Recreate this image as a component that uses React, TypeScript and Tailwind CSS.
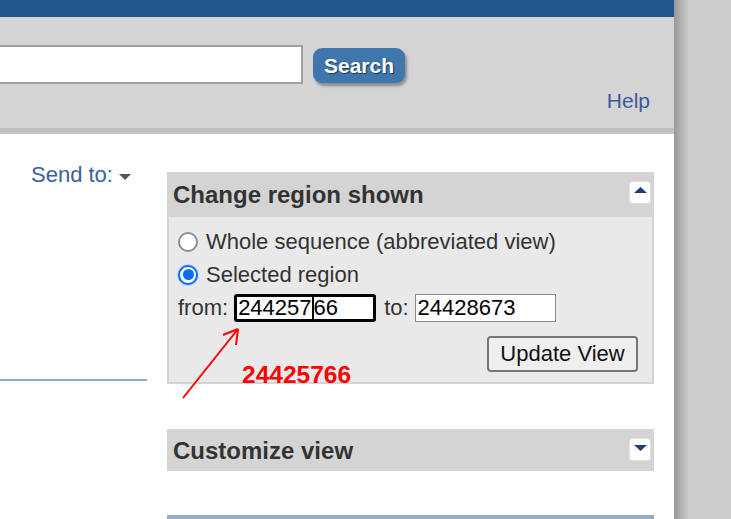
import React from "react";

const FONT = "font-['Liberation_Sans',Arial,sans-serif]";

function ToggleButton({ up }: { up?: boolean }) {
  return (
    <div className="w-[22px] h-[23px] bg-white rounded-[4px] border border-[#e2e2e2] flex items-center justify-center">
      <svg width="13" height="7" viewBox="0 0 13 7" className={up ? "-mt-[4px]" : "-mt-[2px]"}>
        {up ? <polygon points="6.5,0 13,6 0,6" fill="#1f3d73" /> : <polygon points="0,0 13,0 6.5,6" fill="#1f3d73" />}
      </svg>
    </div>
  );
}

function Radio({ checked }: { checked?: boolean }) {
  if (checked) {
    return (
      <span className="w-5 h-5 rounded-full border-2 border-[#0a6cff] bg-white flex items-center justify-center shadow-[0_0_0_1px_#b9d6ff]">
        <span className="w-[11px] h-[11px] rounded-full bg-[#0a6cff]" />
      </span>
    );
  }
  return <span className="w-5 h-5 rounded-full border-2 border-[#8f8f8f] bg-white" />;
}

export default function App() {
  return (
    <div className={`relative w-[731px] h-[519px] overflow-hidden flex ${FONT}`}>
      <div className="w-[674px] shrink-0 flex flex-col bg-white">
        {/* top bar */}
        <div className="h-[17px] shrink-0 bg-[#21568a]" />
        {/* search header */}
        <div className="h-[111px] shrink-0 bg-[#d4d4d4] flex flex-col">
          <div className="pt-[28px] flex items-start">
            <div className="w-[303px] h-[39px] bg-white border-2 border-l-0 border-[#a0a0a0]" />
            <button className="ml-[10px] mt-[3px] w-[92px] h-[35px] rounded-[9px] bg-[#3f77ad] shadow-[2px_3px_3px_rgba(0,0,0,0.35)] text-white font-bold text-[21px] leading-none [text-shadow:1px_1px_1px_#1b3554]">
              Search
            </button>
          </div>
          <div className="mt-[5px] pr-[24px] flex justify-end">
            <span className="text-[21px] leading-[24px] text-[#3a5a9c]">Help</span>
          </div>
        </div>
        <div className="h-[6px] shrink-0 bg-gradient-to-b from-[#bdbdbd] to-[#c6c6c6]" />

        {/* content */}
        <div className="flex shrink-0">
          <div className="w-[147px] shrink-0 flex flex-col">
            <div className="pt-[29px] pl-[31px] flex items-center">
              <span className="text-[22px] leading-[24px] text-[#3b5fa2]">Send to:</span>
              <svg width="12" height="6" viewBox="0 0 12 6" className="ml-[6px] mt-[3px]">
                <polygon points="0,0 12,0 6,6" fill="#555" />
              </svg>
            </div>
            <div className="mt-[192px] h-[2px] bg-[#94aac5]" />
          </div>

          <div className="ml-[20px] w-[487px] shrink-0 pt-[38px] flex flex-col">
            {/* Change region shown */}
            <div className="h-[45px] bg-[#d4d4d4] flex items-center justify-between pl-[6px] pr-[3px]">
              <span className="text-[24px] leading-[28px] font-bold text-[#333]">Change region shown</span>
              <div className="self-start mt-[9px]">
                <ToggleButton up />
              </div>
            </div>
            <div className="bg-[#e9e9e9] border-x-2 border-b-2 border-[#d4d4d4] pt-[8px] pl-[9px] pb-[10px] pr-[14px] text-[22px] text-[#333]">
              <div className="h-[33px] flex items-center gap-[8px]">
                <Radio />
                <span className="leading-[26px]">Whole sequence (abbreviated view)</span>
              </div>
              <div className="h-[33px] flex items-center gap-[8px]">
                <Radio checked />
                <span className="leading-[26px]">Selected region</span>
              </div>
              <div className="h-[33px] flex items-center">
                <span className="leading-[26px]">from:</span>
                <div className="ml-[6px] w-[142px] h-[28px] border-[3px] border-black rounded-[3px] bg-white flex items-center pl-[1px] text-black leading-none">
                  <span>244257</span>
                  <span className="w-[2px] h-[23px] bg-black" />
                  <span>66</span>
                </div>
                <span className="ml-[8px] leading-[26px]">to:</span>
                <div className="ml-[6px] w-[141px] h-[28px] border border-[#8a8a8a] bg-white flex items-center pl-[2px] text-black leading-none">
                  24428673
                </div>
              </div>
              <div className="mt-[12px] flex justify-end">
                <button className="w-[151px] h-[36px] border-2 border-[#767676] rounded-[4px] bg-[#efefef] text-[22px] leading-none text-[#111]">
                  Update View
                </button>
              </div>
            </div>

            {/* Customize view */}
            <div className="mt-[45px] h-[42px] bg-[#d4d4d4] flex items-center justify-between pl-[6px] pr-[3px]">
              <span className="pt-[2px] text-[24px] leading-[28px] font-bold text-[#333]">Customize view</span>
              <div className="self-start mt-[9px]">
                <ToggleButton />
              </div>
            </div>
            <div className="mt-[44px] h-[6px] bg-[#94aac5]" />
          </div>
        </div>
      </div>

      {/* right gray margin */}
      <div className="flex-1 flex">
        <div className="w-[14px] bg-gradient-to-r from-[#999999] to-[#c8c8c8]" />
        <div className="flex-1 bg-[#cdcdcd]" />
      </div>

      {/* red annotation overlay */}
      <svg className="absolute left-0 top-0 pointer-events-none" width="731" height="519">
        <line x1="183" y1="398" x2="238" y2="329" stroke="#ff0000" strokeWidth="2" />
        <line x1="238" y1="329" x2="223" y2="335" stroke="#ff0000" strokeWidth="2" />
        <line x1="238" y1="329" x2="236" y2="345" stroke="#ff0000" strokeWidth="2" />
      </svg>
      <div className="absolute left-[242px] top-[363px] text-[24.5px] leading-[24px] font-bold text-[#ff0000]">
        24425766
      </div>
    </div>
  );
}
